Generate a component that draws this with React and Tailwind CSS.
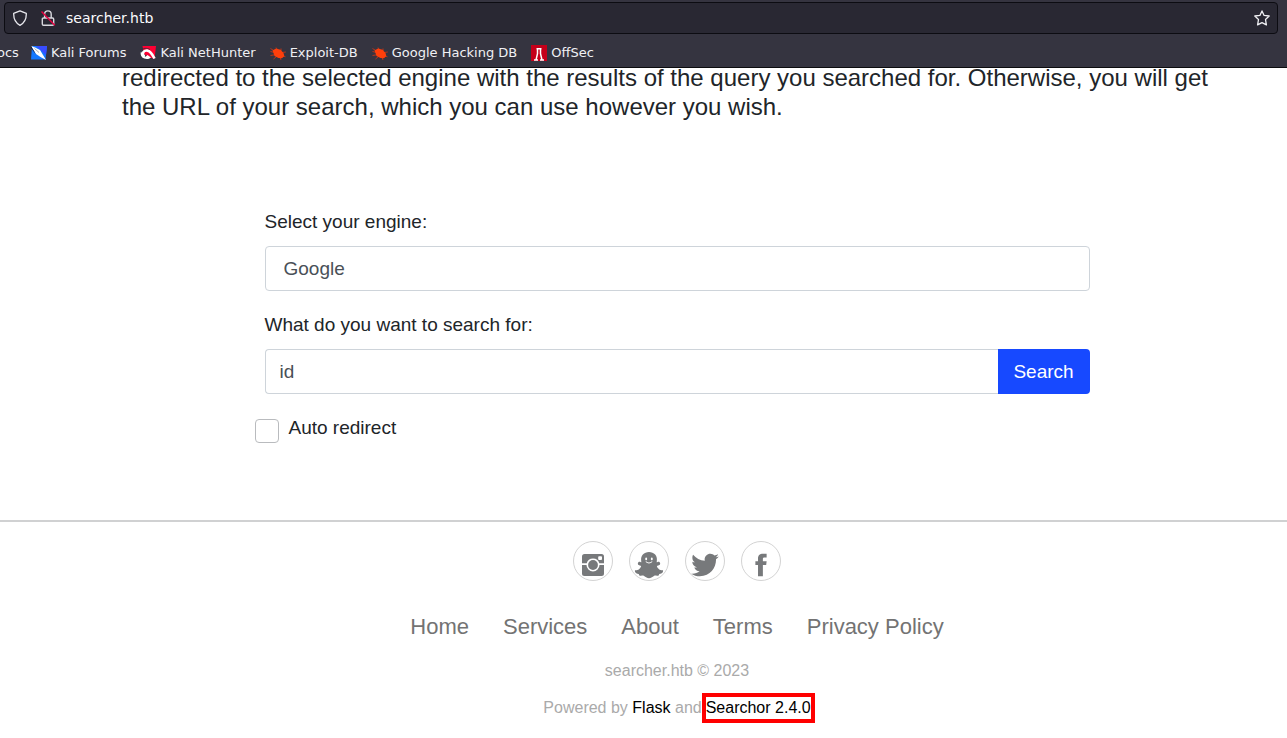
import { IoLogoSnapchat, IoLogoTwitter } from "react-icons/io";

function ShieldIcon() {
  return (
    <svg className="size-4 shrink-0" viewBox="0 0 16 16" fill="none" stroke="#e8e8ee" strokeWidth="1.3" strokeLinejoin="round" aria-hidden="true">
      <path d="M8 .8 14.3 3.3C14.5 9.2 12.6 12.9 8 15.3 3.4 12.9 1.5 9.2 1.7 3.3Z" />
    </svg>
  );
}

function InsecureLockIcon() {
  return (
    <svg className="size-4 shrink-0" viewBox="0 0 16 16" fill="none" aria-hidden="true">
      <path d="M4.6 8V4.2a3.3 3.3 0 0 1 6.6 0V8M3.5 8h9a1.2 1.2 0 0 1 1.2 1.2v4.9a1.2 1.2 0 0 1-1.2 1.2h-9a1.2 1.2 0 0 1-1.2-1.2V9.2A1.2 1.2 0 0 1 3.5 8Z" stroke="#d8d8de" strokeWidth="1.4" />
      <path d="m1.500 1.500 13.300 13.800" stroke="#e2003f" strokeWidth="1.5" />
    </svg>
  );
}

function StarIcon() {
  return (
    <svg className="size-4" viewBox="0 0 16 16" fill="none" stroke="#f0f0f4" strokeWidth="1.3" strokeLinejoin="round" aria-hidden="true">
      <path d="m8 .9 2.1 4.5 5.1.6-3.7 3.5.9 5.4L8 12.6l-4.400 2.300.9-5.400L.8 6l5.100-.6Z" />
    </svg>
  );
}

function ForumsIcon() {
  return (
    <svg className="size-4" viewBox="0 0 16 16" aria-hidden="true">
      <path d="M1 1h15L14.500 14.500H0Z" fill="#1478ff" />
      <path d="M5 1h11l-1 9Z" fill="#384cff" />
      <path d="M0 1 4 2.500 9 5l3 5 3 5-5.500-3L5 9 2.800 5.500Z" fill="#fff" />
      <path d="m0 1 3 5 2 3.500L3 7 0 3Z" fill="#20202a" />
      <path d="m3.500 3.500 4.500 4" stroke="#777" strokeWidth=".6" />
    </svg>
  );
}

function NetHunterIcon() {
  return (
    <svg className="size-4" viewBox="0 0 16 16" aria-hidden="true">
      <path d="M2.500 1H16L14.500 14 9 12 4 9Z" fill="#ff0033" />
      <path d="M4.500 11.500C1 9 3.500 5 7.500 5.600 10.500 6 12 8.500 14.500 13.500" fill="none" stroke="#fff" strokeWidth="2.600" />
      <path d="M1 6.500C-.500 11 3 15 9 13.800L11 12.500 7.500 10 5.500 11.800 3.500 10.500Z" fill="#fff" />
      <path d="M0 5.500C3 3 7 2.700 10 4.500" fill="none" stroke="#302f3a" strokeWidth=".8" />
    </svg>
  );
}

function BugIcon() {
  return (
    <svg className="size-4" viewBox="0 0 16 16" aria-hidden="true">
      <path d="m.500 6.500 4 1M.5 10.500l4-.7M3.500 14l3-2.500M6 2.500l2 3M11 3.500v2.500M12 7.500l3.800-.500M12.500 11l3 .8M10 12l1 3M.5 3.500l4 2.500" stroke="#b8341a" strokeWidth="1" />
      <path d="M2.500 5.500 6 3.500l4.500 1.300 3 3.200.8 3-2.300 2.300-3.500-.3L4.500 11 3.500 8Z" fill="#ff3f0b" />
    </svg>
  );
}

function OffSecIcon() {
  return (
    <svg className="size-4" viewBox="0 0 16 16" aria-hidden="true">
      <path d="M0 0h16v16H0Z" fill="#c5001a" />
      <path d="M5.500 3.700h5M6.500 3.700v5L5 15M9.500 3.700v5L11 15M3 15h4M9 15h4" fill="none" stroke="#fff" strokeWidth="1.5" />
    </svg>
  );
}

function InstagramIcon() {
  return (
    <svg className="h-[22px] w-[22px]" viewBox="0 0 22 22" aria-hidden="true">
      <path fill="currentColor" fillRule="evenodd" d="M2.500 0h17A2.500 2.500 0 0 1 22 2.500V9.300h-4.700a6.500 6.500 0 0 0-12.600 0H0V2.500A2.500 2.500 0 0 1 2.500 0ZM17.100 2.200a.9.9 0 0 0-.9.9v2a.9.9 0 0 0 .9.9h2a.9.9 0 0 0 .9-.9v-2a.9.9 0 0 0-.9-.9Z" />
      <path fill="currentColor" d="M0 11h4.500a6.500 6.500 0 0 0 13 0H22v8.500a2.500 2.500 0 0 1-2.500 2.500h-17A2.500 2.500 0 0 1 0 19.500Z" />
      <circle cx="11" cy="11" r="4.900" fill="currentColor" />
    </svg>
  );
}

function FacebookIcon() {
  return (
    <svg className="size-[30px]" viewBox="0 0 512 512" aria-hidden="true">
      <path fill="currentColor" d="M288 192v-38.100c0-17.200 3.800-25.900 30.500-25.900H352V64h-55.900c-68.500 0-91.100 31.400-91.100 85.300V192h-45v64h45v192h83V256h56.400l7.600-64Z" />
    </svg>
  );
}

const bookmarks = [
  { label: "Kali Forums", Icon: ForumsIcon },
  { label: "Kali NetHunter", Icon: NetHunterIcon },
  { label: "Exploit-DB", Icon: BugIcon },
  { label: "Google Hacking DB", Icon: BugIcon },
  { label: "OffSec", Icon: OffSecIcon },
];

const socials = [
  { label: "Instagram", icon: <InstagramIcon /> },
  { label: "Snapchat", icon: <IoLogoSnapchat className="size-[30px]" /> },
  { label: "Twitter", icon: <IoLogoTwitter className="size-[30px]" /> },
  { label: "Facebook", icon: <FacebookIcon /> },
];

const links = ["Home", "Services", "About", "Terms", "Privacy Policy"];

function BrowserBar() {
  return (
    <header className="relative z-10 border-b border-[#0c0c0f] bg-[#353440] pt-0.5 font-['DejaVu_Sans',sans-serif] text-[#f0f0f4]">
      <div className="mr-[9px] ml-1 flex h-8 items-center rounded border border-[#0c0c12] bg-[#292833] px-[7px]">
        <ShieldIcon />
        <div className="ml-3 flex">
          <InsecureLockIcon />
        </div>
        <input aria-label="Address" defaultValue="searcher.htb" className="ml-2.5 h-6 min-w-0 flex-1 bg-transparent text-sm text-[#fbfbfe] outline-none" />
        <button type="button" aria-label="Bookmark this page">
          <StarIcon />
        </button>
      </div>
      <nav aria-label="Bookmarks" className="flex h-[33px] items-center gap-3.5 overflow-hidden pt-1 text-[13px] whitespace-nowrap">
        <a href="#docs" className="-mr-0.5 -ml-[3px]">ocs</a>
        {bookmarks.map(({ label, Icon }) => (
          <a key={label} href="#bookmark" className="flex items-center gap-1">
            <Icon />
            {label}
          </a>
        ))}
      </nav>
    </header>
  );
}

export default function App() {
  return (
    <div className="min-h-screen overflow-hidden bg-white font-['Liberation_Sans',Arial,sans-serif] text-[#212529]">
      <BrowserBar />
      <main className="-mt-[5px] pl-[67px]">
        <p className="mx-auto max-w-[1110px] text-2xl leading-[29px]">
          redirected to the selected engine with the results of the query you searched for. Otherwise, you will get the URL of your search, which you can use however you wish.
        </p>
        <form className="mx-auto mt-[86px] flex max-w-[825px] flex-col text-[19px] leading-[29px]" onSubmit={(e) => e.preventDefault()}>
          <label htmlFor="engine">Select your engine:</label>
          <select id="engine" className="mt-2.5 h-[45px] w-full appearance-none rounded border border-[#ced4da] bg-white px-[18px] text-[#495057]">
            <option>Google</option>
          </select>
          <label htmlFor="query" className="mt-[19px]">What do you want to search for:</label>
          <div className="mt-2.5 flex h-[45px]">
            <input id="query" defaultValue="id" className="min-w-0 flex-1 rounded-l border border-r-0 border-[#ced4da] px-3.5 text-[#495057]" />
            <button type="submit" className="w-[92px] rounded-r bg-[#1749ff] text-white">Search</button>
          </div>
          <div className="mt-[19px] -ml-2.5 flex gap-2.5">
            <input id="redirect" type="checkbox" className="mt-1.5 size-6 appearance-none rounded border border-[#b9bbbe] bg-white" />
            <label htmlFor="redirect">Auto redirect</label>
          </div>
        </form>
      </main>
      <footer className="mt-[77px] border-t-2 border-[#d0d1d2] pt-[19px] pl-[67px]">
        <div className="flex justify-center gap-4">
          {socials.map(({ label, icon }) => (
            <a key={label} href="#social" aria-label={label} className="flex size-10 items-center justify-center rounded-full border border-[#d3d3d3] pt-2 text-[#77797b]">
              {icon}
            </a>
          ))}
        </div>
        <nav aria-label="Footer" className="mt-[30px] flex flex-wrap justify-center gap-x-[34px] text-[22px] leading-8 text-[#737373]">
          {links.map((label) => (
            <a key={label} href="#page">{label}</a>
          ))}
        </nav>
        <p className="mt-4 text-center text-base text-[#aaaaaa]">searcher.htb © 2023</p>
        <p className="mt-2.5 flex items-center justify-center text-base text-[#aaaaaa]">
          <span>Powered by <a href="#flask" className="text-black">Flask</a> and</span>
          <a href="#searchor" className="-mr-1 border-4 border-[#ff0000] leading-[22px] text-black">Searchor 2.4.0</a>
        </p>
      </footer>
    </div>
  );
}
